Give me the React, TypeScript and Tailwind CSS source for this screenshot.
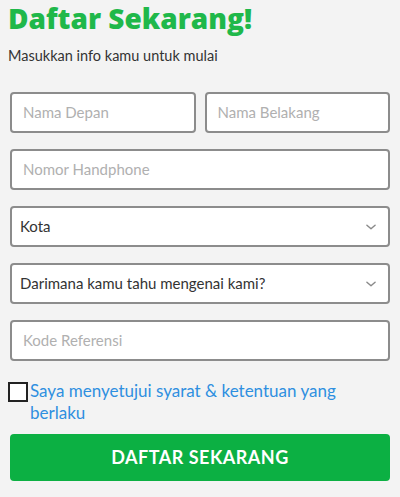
import React from 'react';

function Chevron() {
  return (
    <svg width="14" height="14" viewBox="0 0 24 24" fill="none" stroke="#8a8a8a" strokeWidth="2.5" strokeLinecap="round" strokeLinejoin="round">
      <path d="M5 9l7 6 7-6" />
    </svg>
  );
}

function Field({ placeholder, className = '' }: { placeholder: string; className?: string }) {
  return (
    <div className={`h-[41px] rounded-[4px] border-2 border-[#8c8c8c] bg-white flex items-center px-[11px] ${className}`}>
      <span className="text-[15px] text-[#b0b0b0]">{placeholder}</span>
    </div>
  );
}

function Select({ label }: { label: string }) {
  return (
    <div className="h-[41px] rounded-[4px] border-2 border-[#8c8c8c] bg-white flex items-center justify-between pl-[8px] pr-[10px]">
      <span className="text-[15px] text-[#333]">{label}</span>
      <Chevron />
    </div>
  );
}

export default function App() {
  return (
    <div className="w-[400px] h-[497px] bg-[#f3f3f3] font-['Lato','Liberation_Sans',sans-serif] overflow-hidden">
      <div className="px-[8px]">
        <h1 className="font-['Open_Sans',sans-serif] font-extrabold text-[28px] leading-[36px] text-[#1fb84a]">
          Daftar Sekarang!
        </h1>
        <p className="mt-[10px] text-[14.5px] leading-[20px] text-[#333]">Masukkan info kamu untuk mulai</p>
      </div>

      <div className="mt-[26px] pl-[10px] pr-[10px] flex flex-col gap-[16px]">
        <div className="flex gap-[9px]">
          <Field placeholder="Nama Depan" className="flex-1" />
          <Field placeholder="Nama Belakang" className="flex-1" />
        </div>
        <Field placeholder="Nomor Handphone" />
        <Select label="Kota" />
        <Select label="Darimana kamu tahu mengenai kami?" />
        <Field placeholder="Kode Referensi" />
      </div>

      <div className="mt-[19px] pl-[8px] pr-[10px] flex items-start">
        <span className="mt-[2px] w-[20px] h-[20px] shrink-0 border-2 border-[#222] bg-white" />
        <a className="pl-[2px] text-[17px] leading-[22px] text-[#2e8fe0]">
          Saya menyetujui syarat &amp; ketentuan yang berlaku
        </a>
      </div>

      <div className="mt-[10px] px-[10px]">
        <button className="w-full h-[47px] rounded-[4px] bg-[#0cb043] text-white font-bold text-[18px] tracking-[0.5px] font-['Lato',sans-serif]">
          DAFTAR SEKARANG
        </button>
      </div>
    </div>
  );
}
